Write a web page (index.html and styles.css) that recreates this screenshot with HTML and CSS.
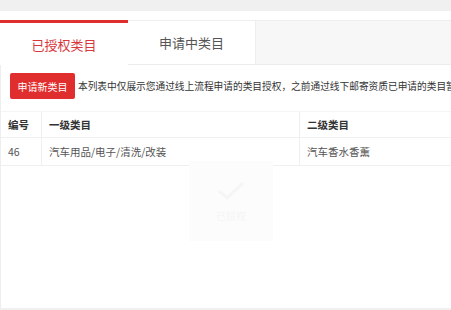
FILE: index.html
```html
<!DOCTYPE html>
<html lang="zh-CN">
<head>
  <meta charset="UTF-8">
  <meta name="viewport" content="width=device-width, initial-scale=1.0">
  <title>类目管理</title>
  <link rel="stylesheet" href="styles.css">
</head>
<body>
  <!-- Top strip -->
  <div class="topbar"></div>

  <div class="page">
    <!-- Tabs -->
    <div class="tabs">
      <div class="tab active">已授权类目</div>
      <div class="tab">申请中类目</div>
    </div>

    <!-- Panel -->
    <div class="panel">
      <div class="toolbar">
        <button class="btn-apply">申请新类目</button>
        <span class="note">本列表中仅展示您通过线上流程申请的类目授权，之前通过线下邮寄资质已申请的类目暂不在此展示</span>
      </div>

      <table class="cat-table">
        <thead>
          <tr>
            <th class="col-id">编号</th>
            <th class="col-first">一级类目</th>
            <th>二级类目</th>
          </tr>
        </thead>
        <tbody>
          <tr>
            <td>46</td>
            <td>汽车用品/电子/清洗/改装</td>
            <td>汽车香水香薰</td>
          </tr>
        </tbody>
      </table>

      <!-- faint watermark -->
      <div class="watermark">
        <svg width="30" height="22" viewBox="0 0 30 22"><path d="M3 11 L11 18 L27 3" fill="none" stroke="#f5f5f5" stroke-width="3"/></svg>
        <span>已授权</span>
      </div>
    </div>
  </div>
</body>
</html>
```

FILE: styles.css
```css
body {
  margin: 0;
  padding: 0;
  background-color: #f0f0f0;
  font-family: "Noto Sans CJK SC", "Liberation Sans", sans-serif;
  color: #333;
  overflow: hidden;
}

.topbar {
  height: 11px;
  background-color: #f0f0f0;
}

.page {
  background-color: #fff;
  padding-top: 9px;
  height: 288px;
}

/* Tabs */
.tabs {
  display: flex;
  height: 43px;
  background-color: #f7f7f7;
  border-top: 1px solid #eee;
  border-bottom: 1px solid #ececec;
}

.tab {
  width: 128px;
  background-color: #fff;
  border-right: 1px solid #eee;
  font-size: 13px;
  color: #555;
  display: flex;
  align-items: center;
  justify-content: center;
  box-sizing: border-box;
}

.tab.active {
  color: #d9363e;
  border-top: 3px solid #e02e2e;
  margin-top: -1px;
  height: 45px;
  border-right: none;
}

/* Panel */
.panel {
  position: relative;
  border-left: 1px solid #eee;
  height: 244px;
  overflow: hidden;
}

.toolbar {
  display: flex;
  align-items: center;
  gap: 3px;
  padding: 8px 0 0 9px;
  white-space: nowrap;
}

.btn-apply {
  background-color: #e02e2e;
  color: #fff;
  border: none;
  border-radius: 2px;
  height: 26px;
  width: 65px;
  padding: 0;
  font-family: inherit;
  font-size: 10px;
  flex-shrink: 0;
}

.note {
  font-size: 9.7px;
  color: #333;
}

/* Table */
.cat-table {
  width: 100%;
  margin-top: 12px;
  border-collapse: collapse;
  font-size: 10.5px;
}

.cat-table th,
.cat-table td {
  text-align: left;
  padding: 0 7px;
  border-left: 1px solid #f0f0f0;
  border-bottom: 1px solid #f0f0f0;
}

.cat-table th:first-child,
.cat-table td:first-child {
  border-left: none;
}

.cat-table th {
  height: 25px;
  font-weight: bold;
  color: #333;
  border-top: 1px solid #f5f5f5;
}

.cat-table td {
  height: 27px;
  color: #555;
}

.cat-table .col-id {
  width: 26px;
}

.cat-table .col-first {
  width: 243px;
}

.watermark {
  position: absolute;
  left: 188px;
  top: 96px;
  width: 84px;
  height: 80px;
  background-color: #fcfcfc;
  display: flex;
  flex-direction: column;
  align-items: center;
  justify-content: center;
  gap: 6px;
  font-size: 10px;
  color: #f5f5f5;
}
```
